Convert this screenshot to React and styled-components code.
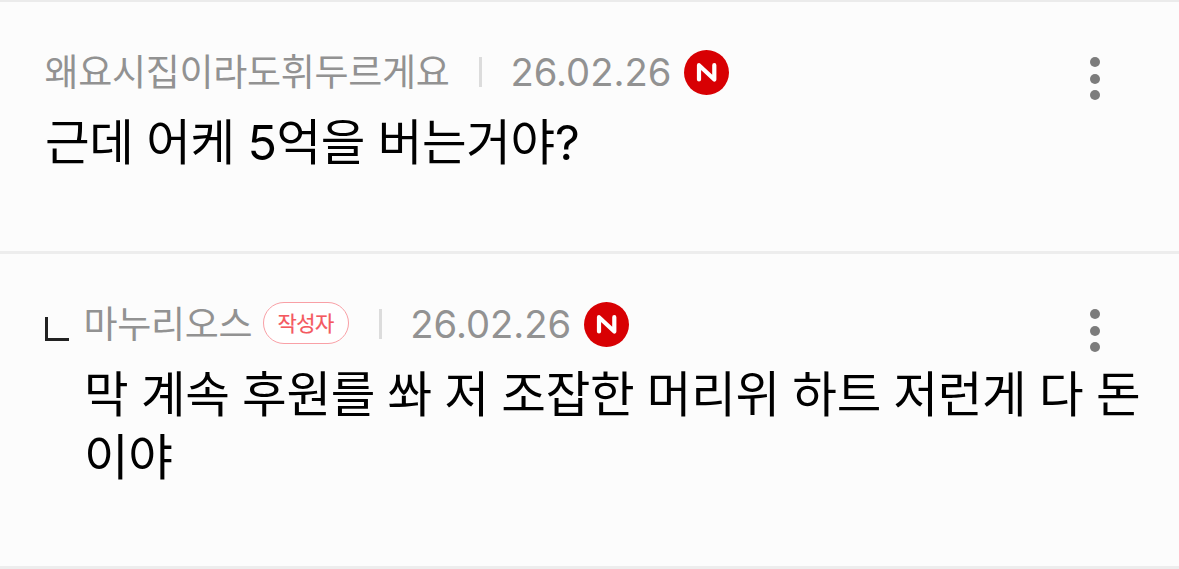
import React from 'react';
import styled, { createGlobalStyle } from 'styled-components';

const GlobalStyle = createGlobalStyle`
  * {
    box-sizing: border-box;
  }

  body {
    margin: 0;
    background: #fcfcfc;
    font-family: Inter, 'Noto Sans CJK KR', sans-serif;
  }
`;

const CommentList = styled.ul`
  height: 569px;
  margin: 0;
  padding: 0;
  overflow: hidden;
  list-style: none;
  border-top: 2px solid #ebebeb;
`;

const CommentItem = styled.li`
  display: flex;
  align-items: flex-start;
  height: ${(props) => (props.$reply ? '315px' : '252px')};
  padding: 46px 0 0 45px;
  border-bottom: 3px solid #ededed;
`;

const ReplyMark = styled.span`
  flex: none;
  width: 24px;
  height: 24px;
  margin: 17px 15px 0 0;
  border: solid #222;
  border-width: 0 0 3px 3px;
`;

const Content = styled.div`
  flex: 1;
  min-width: 0;
`;

const Meta = styled.div`
  display: flex;
  align-items: center;
  height: 48px;
  color: #929292;
`;

const Nickname = styled.span`
  margin: 2px 0 0 -0.5px;
  font-size: 37px;
  line-height: 48px;
  letter-spacing: -0.3px;
  white-space: nowrap;
`;

const AuthorBadge = styled.span`
  width: 86px;
  height: 42px;
  margin: -3px 0 0 11px;
  padding-right: 1px;
  border: 1.5px solid #f9a0a6;
  border-radius: 21px;
  background: #fff;
  color: #f4595f;
  font-size: 21px;
  line-height: 41px;
  letter-spacing: -0.6px;
  text-align: center;
  -webkit-text-stroke: 0.2px #f4595f;
`;

const Divider = styled.span`
  width: 3px;
  height: 30px;
  margin: -1px 28px 0 30px;
  background: #dcdcdc;
`;

const DateText = styled.span`
  width: 161px;
  font-size: 38.2px;
  line-height: 48px;
  white-space: nowrap;
`;

const NewIcon = styled.svg`
  flex: none;
  width: 45px;
  height: 45px;
  margin-left: 13px;
`;

const Message = styled.p`
  margin: 16px 0 0;
  color: #000;
  font-size: 48.5px;
  line-height: 62.5px;
  letter-spacing: -0.33px;
  word-spacing: -0.7px;
  white-space: pre-line;
`;

const MoreButton = styled.button`
  display: flex;
  flex: none;
  flex-direction: column;
  gap: 6.5px;
  margin: 9px 79px 0 -89px;
  padding: 0;
  border: 0;
  background: none;
`;

const Dot = styled.span`
  width: 10px;
  height: 10px;
  border-radius: 50%;
  background: #7c7c7c;
`;

const comments = [
  {
    name: '왜요시집이라도휘두르게요',
    date: '26.02.26',
    text: '근데 어케 5억을 버는거야?',
  },
  {
    name: '마누리오스',
    date: '26.02.26',
    text: '막 계속 후원를 쏴 저 조잡한 머리위 하트 저런게 다 돈\n이야',
    reply: true,
    author: true,
  },
];

function Comment({ comment }) {
  return (
    <CommentItem $reply={comment.reply}>
      {comment.reply && <ReplyMark />}
      <Content>
        <Meta>
          <Nickname>{comment.name}</Nickname>
          {comment.author && <AuthorBadge>작성자</AuthorBadge>}
          <Divider />
          <DateText>{comment.date}</DateText>
          <NewIcon viewBox='0 0 45 45'>
            <circle cx='22.5' cy='22.5' r='22.5' fill='#d80003' />
            <path
              d='M15 29.5V15.2L30.3 29.5V15.2'
              fill='none'
              stroke='#fff'
              strokeWidth='4.2'
              strokeLinecap='round'
              strokeLinejoin='round'
            />
          </NewIcon>
        </Meta>
        <Message>{comment.text}</Message>
      </Content>
      <MoreButton aria-label='더보기'>
        <Dot />
        <Dot />
        <Dot />
      </MoreButton>
    </CommentItem>
  );
}

export default function App() {
  return (
    <>
      <GlobalStyle />
      <CommentList>
        {comments.map((comment) => (
          <Comment key={comment.name} comment={comment} />
        ))}
      </CommentList>
    </>
  );
}
